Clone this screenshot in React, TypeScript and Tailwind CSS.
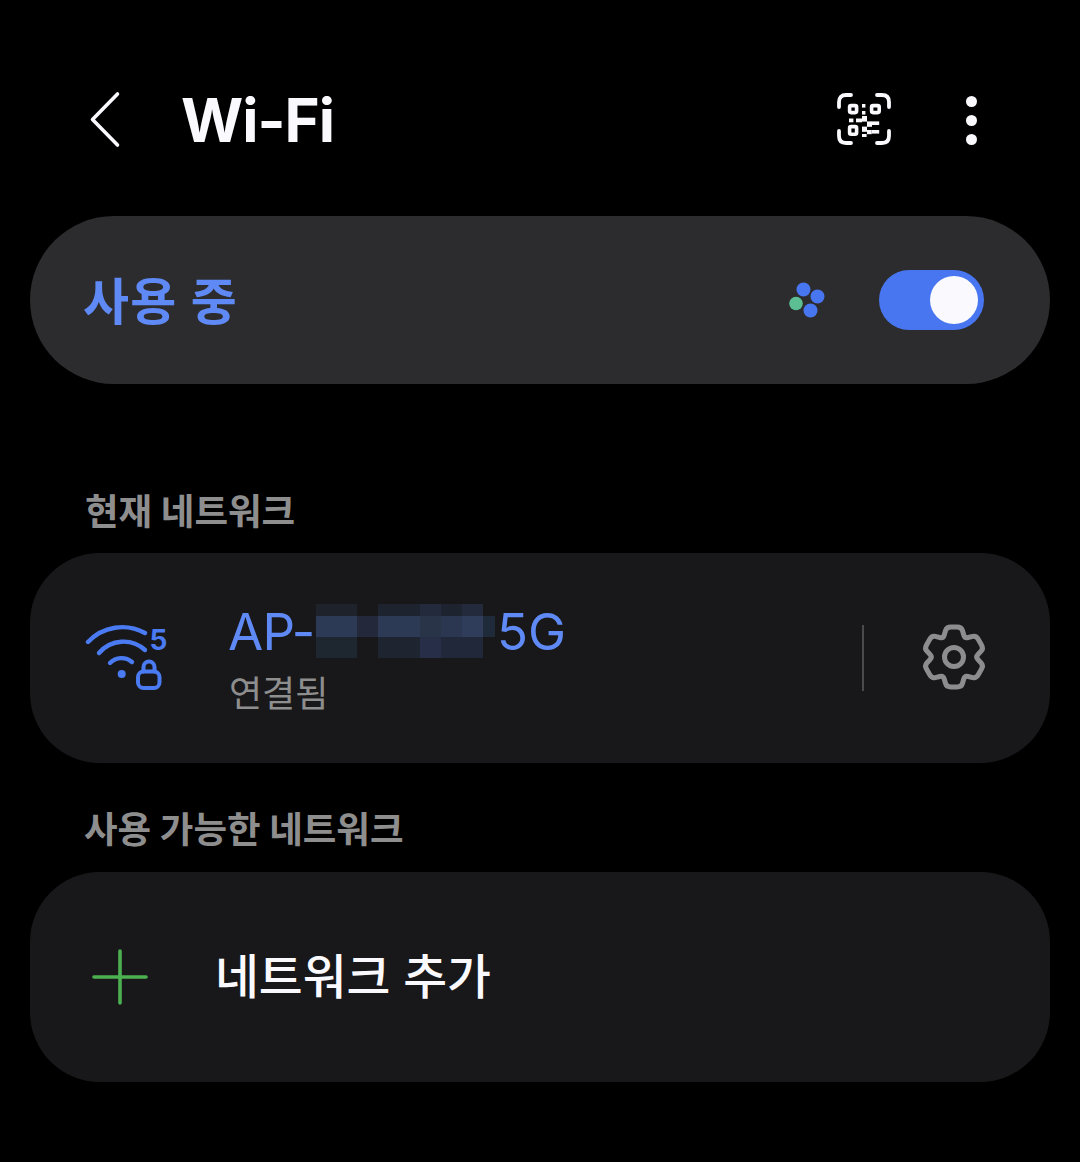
import React from 'react';

const KR = "font-['Inter','Noto_Sans_CJK_KR',sans-serif]";

const BackIcon = () => (
    <svg width="32" height="58" viewBox="0 0 32 58" fill="none" stroke="#fafafe" strokeWidth="3.6" strokeLinecap="round" strokeLinejoin="round">
        <path d="M28.5 3 L3.5 28.5 L28.5 54" />
    </svg>
);

const QrIcon = () => (
    <svg width="56" height="54" viewBox="0 1 56 54" fill="none">
        <g stroke="#fafafe" strokeWidth="3.8" strokeLinecap="round">
            <path d="M15 3 H10 Q3 3 3 10 V15" />
            <path d="M41 3 H46 Q53 3 53 10 V15" />
            <path d="M3 39 V44 Q3 51 10 51 H15" />
            <path d="M53 39 V44 Q53 51 46 51 H41" />
        </g>
        <g stroke="#fafafe" strokeWidth="3.6" fill="none">
            <rect x="13.6" y="13.6" width="7" height="7" rx="1.5" />
            <rect x="35.6" y="13.6" width="7.6" height="7" rx="1.5" />
            <rect x="13.6" y="34.6" width="7" height="7.6" rx="1.5" />
        </g>
        <g fill="#fafafe">
            <rect x="26" y="12" width="3.4" height="3.6" />
            <rect x="26" y="19" width="3.4" height="3.6" />
            <rect x="13" y="26.5" width="4.4" height="3.8" />
            <rect x="20" y="26.5" width="6" height="3.8" />
            <rect x="26" y="24" width="5" height="5.6" />
            <rect x="31" y="29.4" width="5" height="5.4" />
            <rect x="35.7" y="29.4" width="7.5" height="3.6" />
            <rect x="26" y="34.6" width="5" height="5.2" />
            <rect x="31" y="38" width="4.7" height="4.2" />
            <rect x="35.7" y="38" width="7.5" height="3.6" />
            <rect x="26" y="42" width="4.6" height="3" />
        </g>
    </svg>
);

const DotsIcon = () => (
    <div className="flex flex-col gap-[8px]">
        <div className="w-[11px] h-[11px] rounded-full bg-[#fafafe]" />
        <div className="w-[11px] h-[11px] rounded-full bg-[#fafafe]" />
        <div className="w-[11px] h-[11px] rounded-full bg-[#fafafe]" />
    </div>
);

const ScanDots = () => (
    <svg width="36" height="36" viewBox="0 0 36 36">
        <circle cx="14.5" cy="7.5" r="7" fill="#4876f0" />
        <circle cx="28.5" cy="14.5" r="7" fill="#4876f0" />
        <circle cx="21.5" cy="28.5" r="7" fill="#4876f0" />
        <circle cx="7" cy="21.5" r="6.8" fill="#5cbf93" />
    </svg>
);

const WifiLockIcon = () => (
    <svg width="84" height="68" viewBox="0 0 84 68" fill="none" stroke="#4a7bf2" strokeLinecap="round" strokeLinejoin="round" className="mb-[2px]">
        <g strokeWidth="4.4">
            <path d="M3 19 A47 47 0 0 1 60 10" />
            <path d="M14 30 A32 32 0 0 1 60 27" />
            <path d="M25 40 A16 16 0 0 1 47 39" />
        </g>
        <circle cx="36.7" cy="51" r="4" fill="#4a7bf2" stroke="none" />
        <rect x="53" y="48.5" width="21.5" height="16.5" rx="5.5" strokeWidth="4" />
        <path d="M58.5 48.5 V44 a5.5 5.5 0 0 1 11 0 V48.5" strokeWidth="4" />
        <text x="64.5" y="27" fill="#4a7bf2" stroke="none" fontSize="28" fontWeight="700" fontFamily="Inter, sans-serif">5</text>
    </svg>
);

// six toothed gear, built as a rounded polygon around the centre of a 70x70 box
const gearPath = (() => {
    const pts: [number, number][] = [];
    for (let i = 0; i < 6; i++) {
        const a = -90 + i * 60;
        [[a - 14, 30.8], [a + 14, 30.8], [a + 30, 21.5]].forEach(([deg, r]) => {
            const rad = (deg * Math.PI) / 180;
            pts.push([35 + r * Math.cos(rad), 35 + r * Math.sin(rad)]);
        });
    }
    const lerp = (p: [number, number], q: [number, number], t: number) =>
        `${(p[0] + (q[0] - p[0]) * t).toFixed(2)} ${(p[1] + (q[1] - p[1]) * t).toFixed(2)}`;
    let d = '';
    pts.forEach((p, i) => {
        const prev = pts[(i + pts.length - 1) % pts.length];
        const next = pts[(i + 1) % pts.length];
        d += `${i === 0 ? 'M' : 'L'}${lerp(p, prev, 0.3)} Q${p[0].toFixed(2)} ${p[1].toFixed(2)} ${lerp(p, next, 0.3)} `;
    });
    return d + 'Z';
})();

const GearIcon = () => (
    <svg width="70" height="70" viewBox="0 0 70 70" fill="none" stroke="#8d8d8f" strokeWidth="5" strokeLinejoin="round" className="mb-[2px]">
        <path d={gearPath} />
        <circle cx="35" cy="35" r="9.5" />
    </svg>
);

const PlusIcon = () => (
    <svg width="56" height="56" viewBox="0 0 56 56" stroke="#4caf50" strokeWidth="3.6" strokeLinecap="round">
        <path d="M28 2 V54 M2 28 H54" />
    </svg>
);

// pixelated patch over the network name
const Redaction = () => (
    <div className="absolute left-[316px] top-[604px] flex flex-col">
        <div className="flex h-[12px]">
            <div className="w-[41px] bg-[#1e222b]" />
            <div className="w-[21px] bg-[#18181a]" />
            <div className="w-[42px] bg-[#1e2330]" />
            <div className="w-[21px] bg-[#232a3b]" />
            <div className="w-[21px] bg-[#1e2330]" />
            <div className="w-[21px] bg-[#232a3b]" />
        </div>
        <div className="flex h-[21px]">
            <div className="w-[41px] bg-[#2d3a55]" />
            <div className="w-[21px] bg-[#23293a]" />
            <div className="w-[42px] bg-[#2d3a55]" />
            <div className="w-[21px] bg-[#2a3448]" />
            <div className="w-[21px] bg-[#2b3650]" />
            <div className="w-[21px] bg-[#2f3c5a]" />
            <div className="w-[12px] bg-[#1f2a3a]" />
        </div>
        <div className="flex h-[21px]">
            <div className="w-[41px] bg-[#1e2630]" />
            <div className="w-[21px] bg-[#18181a]" />
            <div className="w-[42px] bg-[#1e2530]" />
            <div className="w-[21px] bg-[#262f47]" />
            <div className="w-[42px] bg-[#20283a]" />
        </div>
    </div>
);

export default function App() {
    return (
        <div className={`relative w-[1080px] h-[1162px] bg-black overflow-hidden ${KR}`}>
            <header className="h-[216px] flex items-center pl-[89px] pr-[103px] pt-[24px]">
                <BackIcon />
                <h1 className="ml-[60px] text-[60px] leading-none font-bold tracking-[-1px] text-[#fafafe]">Wi-Fi</h1>
                <div className="ml-auto flex items-center gap-[74px]">
                    <QrIcon />
                    <DotsIcon />
                </div>
            </header>

            <section className="mx-[30px] h-[168px] rounded-[84px] bg-[#2c2c2e] flex items-center pl-[53px] pr-[66px]">
                <span className="mt-[4px] text-[50px] leading-none font-bold text-[#5f8af5] tracking-[1.3px]">사용 중</span>
                <div className="ml-auto flex items-center gap-[54px]">
                    <ScanDots />
                    <div className="w-[105px] h-[60px] rounded-full bg-[#4876f0] flex items-center justify-end pr-[6px]">
                        <div className="w-[48px] h-[48px] rounded-full bg-[#fafafe]" />
                    </div>
                </div>
            </section>

            <h2 className="mt-[106px] ml-[85px] h-[63px] text-[36.5px] leading-[44px] font-bold text-[#8e8e8e]">현재 네트워크</h2>

            <section className="mx-[30px] h-[210px] rounded-[70px] bg-[#18181a] flex items-center pl-[55px] pr-[61px]">
                <WifiLockIcon />
                <div className="ml-[59px] pt-[3px] flex flex-col">
                    <div className="text-[51px] leading-[58px] text-[#5f8af5] flex">
                        <span className="w-[269px] shrink-0 whitespace-nowrap tracking-[-0.8px]">AP-1</span>
                        <span>5G</span>
                    </div>
                    <div className="mt-[10px] ml-[1px] text-[36px] leading-[46px] text-[#8e8e8e]">연결됨</div>
                </div>
                <div className="ml-auto w-[2px] h-[66px] bg-[#4a4a4c]" />
                <div className="ml-[55px] flex">
                    <GearIcon />
                </div>
            </section>

            <h2 className="mt-[45px] ml-[84px] h-[64px] text-[36.5px] leading-[44px] font-bold text-[#8e8e8e]">사용 가능한 네트워크</h2>

            <section className="mx-[30px] h-[210px] rounded-[70px] bg-[#18181a] flex items-center pl-[62px]">
                <PlusIcon />
                <span className="ml-[67px] mt-[2px] text-[47.7px] leading-none font-medium text-[#fafafe]">네트워크 추가</span>
            </section>

            <Redaction />
        </div>
    );
}
